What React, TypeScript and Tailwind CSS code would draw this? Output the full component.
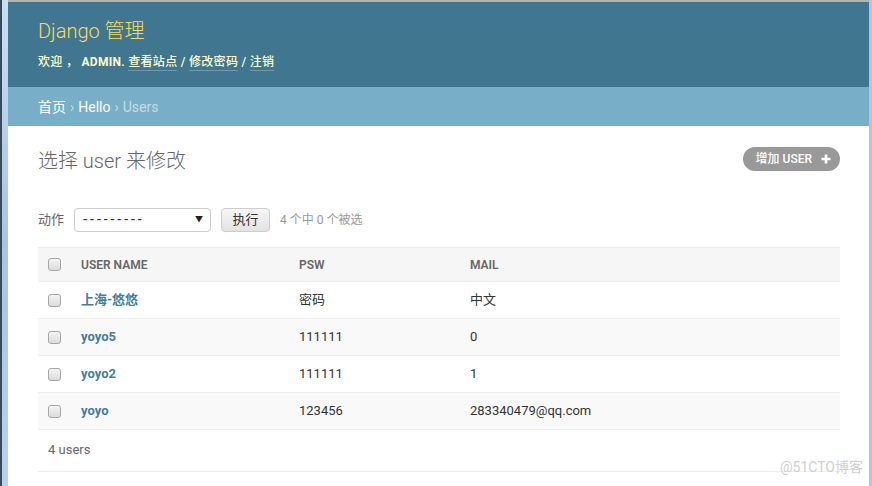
const rows = [
  { name: "上海-悠悠", psw: "密码", mail: "中文" },
  { name: "yoyo5", psw: "111111", mail: "0" },
  { name: "yoyo2", psw: "111111", mail: "1" },
  { name: "yoyo", psw: "123456", mail: "283340479@qq.com" },
];

function Checkbox() {
  return (
    <span className="block w-[13px] h-[13px] rounded-[3px] border border-[#a6a6a6] bg-gradient-to-b from-[#f4f4f4] to-[#dcdcdc]" />
  );
}

export default function App() {
  return (
    <div
      className="flex w-[872px] h-[486px] overflow-hidden bg-white"
      style={{ fontFamily: 'Roboto, "Noto Sans CJK SC", sans-serif' }}
    >
      {/* window chrome, left */}
      <div className="w-[8px] flex shrink-0">
        <div className="w-[2px] bg-[#3b4a5a]" />
        <div className="flex-1 bg-gradient-to-b from-[#c9def3] via-[#a8c4e0] to-[#b9d3ee]" />
      </div>

      <div className="flex-1 flex flex-col">
        <div className="h-[2px] bg-[#b4b4b4]" />
        <header className="h-[85px] bg-[#417690] px-[30px] pt-[16px]">
          <h1 className="text-[20px] leading-[26px] text-[#f5dd5d] font-light">Django 管理</h1>
          <div className="mt-[10px] text-[12px] leading-[16px] text-[#ffffcc] font-medium tracking-[0.3px]">
            欢迎 ， <strong className="font-bold">ADMIN</strong>.{" "}
            <a className="border-b border-[#ffffff40] pb-[1px]">查看站点</a> /{" "}
            <a className="border-b border-[#ffffff40] pb-[1px]">修改密码</a> /{" "}
            <a className="border-b border-[#ffffff40] pb-[1px]">注销</a>
          </div>
        </header>
        <div className="h-[39px] bg-[#79aec8] px-[30px] pt-[1px] flex items-center text-[14px] text-white">
          <span>首页</span>
          <span className="mx-[4px] text-[#c4dce8]">›</span>
          <span>Hello</span>
          <span className="mx-[4px] text-[#c4dce8]">›</span>
          <span className="text-[#c4dce8]">Users</span>
        </div>

        <main className="flex-1 pl-[30px] pr-[29px] relative">
          <div className="flex items-center justify-between mt-[21px] h-[24px]">
            <h2 className="text-[20px] font-light text-[#666] mt-[3px]">选择 user 来修改</h2>
            <button className="h-[24px] rounded-full bg-[#999] text-white text-[12px] font-medium pl-[13px] pr-[9px] flex items-center gap-[9px]">
              <span>增加 USER</span>
              <svg width="10" height="10" viewBox="0 0 10 10">
                <path d="M5 0.5v9M0.5 5h9" stroke="white" strokeWidth="2.6" />
              </svg>
            </button>
          </div>

          <div className="flex items-center mt-[37px] h-[24px] text-[13px]">
            <span className="text-[#666]">动作</span>
            <div className="ml-[10px] w-[137px] h-[24px] border border-[#ccc] rounded-[4px] flex items-center justify-between pl-[8px] pr-[7px] text-[#333]">
              <span className="tracking-[2.4px] font-medium">---------</span>
              <span className="text-[8px] text-[#222]">▼</span>
            </div>
            <button className="ml-[10px] w-[49px] h-[24px] border border-[#ccc] rounded-[4px] bg-gradient-to-b from-[#f6f6f6] to-[#e3e3e3] text-[#333] text-[13px]">
              执行
            </button>
            <span className="ml-[10px] text-[12px] text-[#999]">4 个中 0 个被选</span>
          </div>

          <table className="w-full mt-[15px] border-collapse text-[13px]">
            <thead>
              <tr className="bg-[#f6f6f6] border-t border-[#eee] h-[34px]">
                <th className="w-[43px] pl-[10px] text-left align-middle">
                  <Checkbox />
                </th>
                <th className="w-[218px] text-left text-[12px] font-semibold text-[#666]">USER NAME</th>
                <th className="w-[171px] text-left text-[12px] font-semibold text-[#666]">PSW</th>
                <th className="text-left text-[12px] font-semibold text-[#666]">MAIL</th>
              </tr>
            </thead>
            <tbody>
              {rows.map((r, i) => (
                <tr key={r.name} className={`h-[37px] border-t border-[#eee] ${i % 2 ? "bg-[#f9f9f9]" : "bg-white"}`}>
                  <td className="pl-[10px] align-middle">
                    <Checkbox />
                  </td>
                  <td className="font-bold text-[#447e9b]">{r.name}</td>
                  <td className="text-[#333]">{r.psw}</td>
                  <td className="text-[#333]">{r.mail}</td>
                </tr>
              ))}
              <tr className="border-t border-b border-[#eee] h-[42px]">
                <td colSpan={4} className="pl-[10px] pb-[2px] text-[13px] text-[#666]">4 users</td>
              </tr>
            </tbody>
          </table>

          <span className="absolute right-[6px] bottom-[8px] text-[14px] text-[#cfcfcf]">@51CTO博客</span>
        </main>
      </div>

      {/* window chrome, right */}
      <div className="w-[3px] shrink-0 bg-[#a9c8ea]" />
    </div>
  );
}
